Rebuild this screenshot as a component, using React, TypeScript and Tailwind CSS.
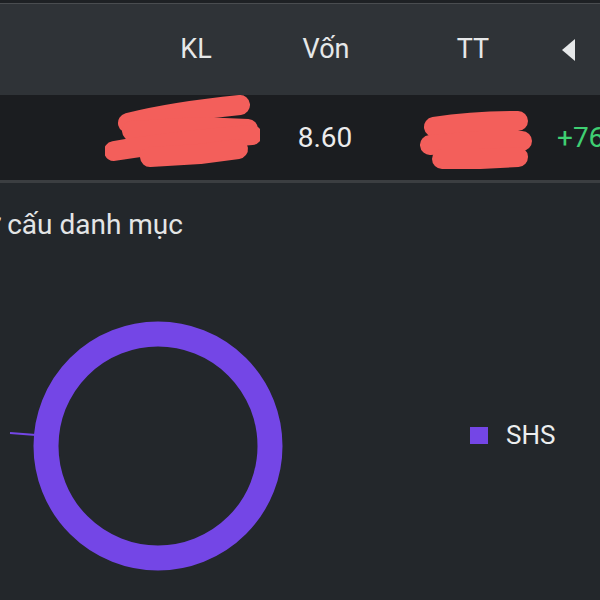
import React from 'react';

const font = { fontFamily: 'Roboto, "Noto Sans", sans-serif' };

function Scribble1() {
  return (
    <svg width="155" height="85" viewBox="105 96 155 85" className="shrink-0">
      <g fill="none" stroke="#f35f5b" strokeWidth="20" strokeLinecap="round" strokeLinejoin="round">
        <path d="M128 124 C160 116 200 110 240 106" />
        <path d="M132 132 L200 128 L248 130" />
        <path d="M114 152 C150 146 200 140 252 136" />
        <path d="M150 158 L200 155 L238 150" />
      </g>
    </svg>
  );
}

function Scribble2() {
  return (
    <svg width="115" height="85" viewBox="420 96 115 85" className="shrink-0">
      <g fill="none" stroke="#f35f5b" strokeWidth="20" strokeLinecap="round" strokeLinejoin="round">
        <path d="M434 128 C460 124 490 122 518 122" />
        <path d="M430 146 L480 142 L522 142" />
        <path d="M442 160 L480 160 L518 158" />
      </g>
    </svg>
  );
}

function Donut() {
  return (
    <svg width="300" height="300" viewBox="0 0 300 300" className="shrink-0">
      <line x1="10" y1="133" x2="36" y2="135" stroke="#7446e6" strokeWidth="2" />
      <circle cx="158" cy="146" r="112" fill="none" stroke="#7446e6" strokeWidth="25" />
    </svg>
  );
}

export default function App() {
  return (
    <div className="w-[600px] h-[600px] overflow-hidden bg-[#23272b] flex flex-col" style={font}>
      <div className="h-[3px] bg-[#1e2124]" />
      <div className="h-px bg-[#4a4d50]" />
      <div className="h-[91px] bg-[#2f3337] flex items-center text-[27px] text-[#e6e8e9]">
        <div className="w-[136px] shrink-0" />
        <div className="w-[120px] shrink-0 text-center">KL</div>
        <div className="w-[140px] shrink-0 text-center">Vốn</div>
        <div className="w-[154px] shrink-0 text-center">TT</div>
        <div className="ml-[12px] w-0 h-0 border-y-[11px] border-y-transparent border-r-[13px] border-r-[#e6e8e9]" />
      </div>
      <div className="h-[85px] bg-[#1b1d20] flex items-center text-[28px] whitespace-nowrap">
        <div className="w-[105px] shrink-0" />
        <Scribble1 />
        <div className="w-[130px] shrink-0 text-center text-[#ececec]">8.60</div>
        <div className="w-[30px] shrink-0" />
        <Scribble2 />
        <div className="ml-[22px] text-[#3fcf72]">+76.5%</div>
      </div>
      <div className="h-[3px] bg-[#3b3e41]" />
      <div className="flex flex-col">
        <div className="pt-[25px] -ml-[34px] text-[28px] leading-[34px] text-[#e3e5e6] whitespace-nowrap">
          Cơ cấu danh mục
        </div>
        <div className="mt-[58px] flex items-start">
          <Donut />
          <div className="ml-[170px] mt-[120px] flex items-center gap-[18px]">
            <div className="w-[18px] h-[17px] bg-[#7446e6]" />
            <span className="text-[26px] leading-[30px] text-[#eceeef]">SHS</span>
          </div>
        </div>
      </div>
    </div>
  );
}
